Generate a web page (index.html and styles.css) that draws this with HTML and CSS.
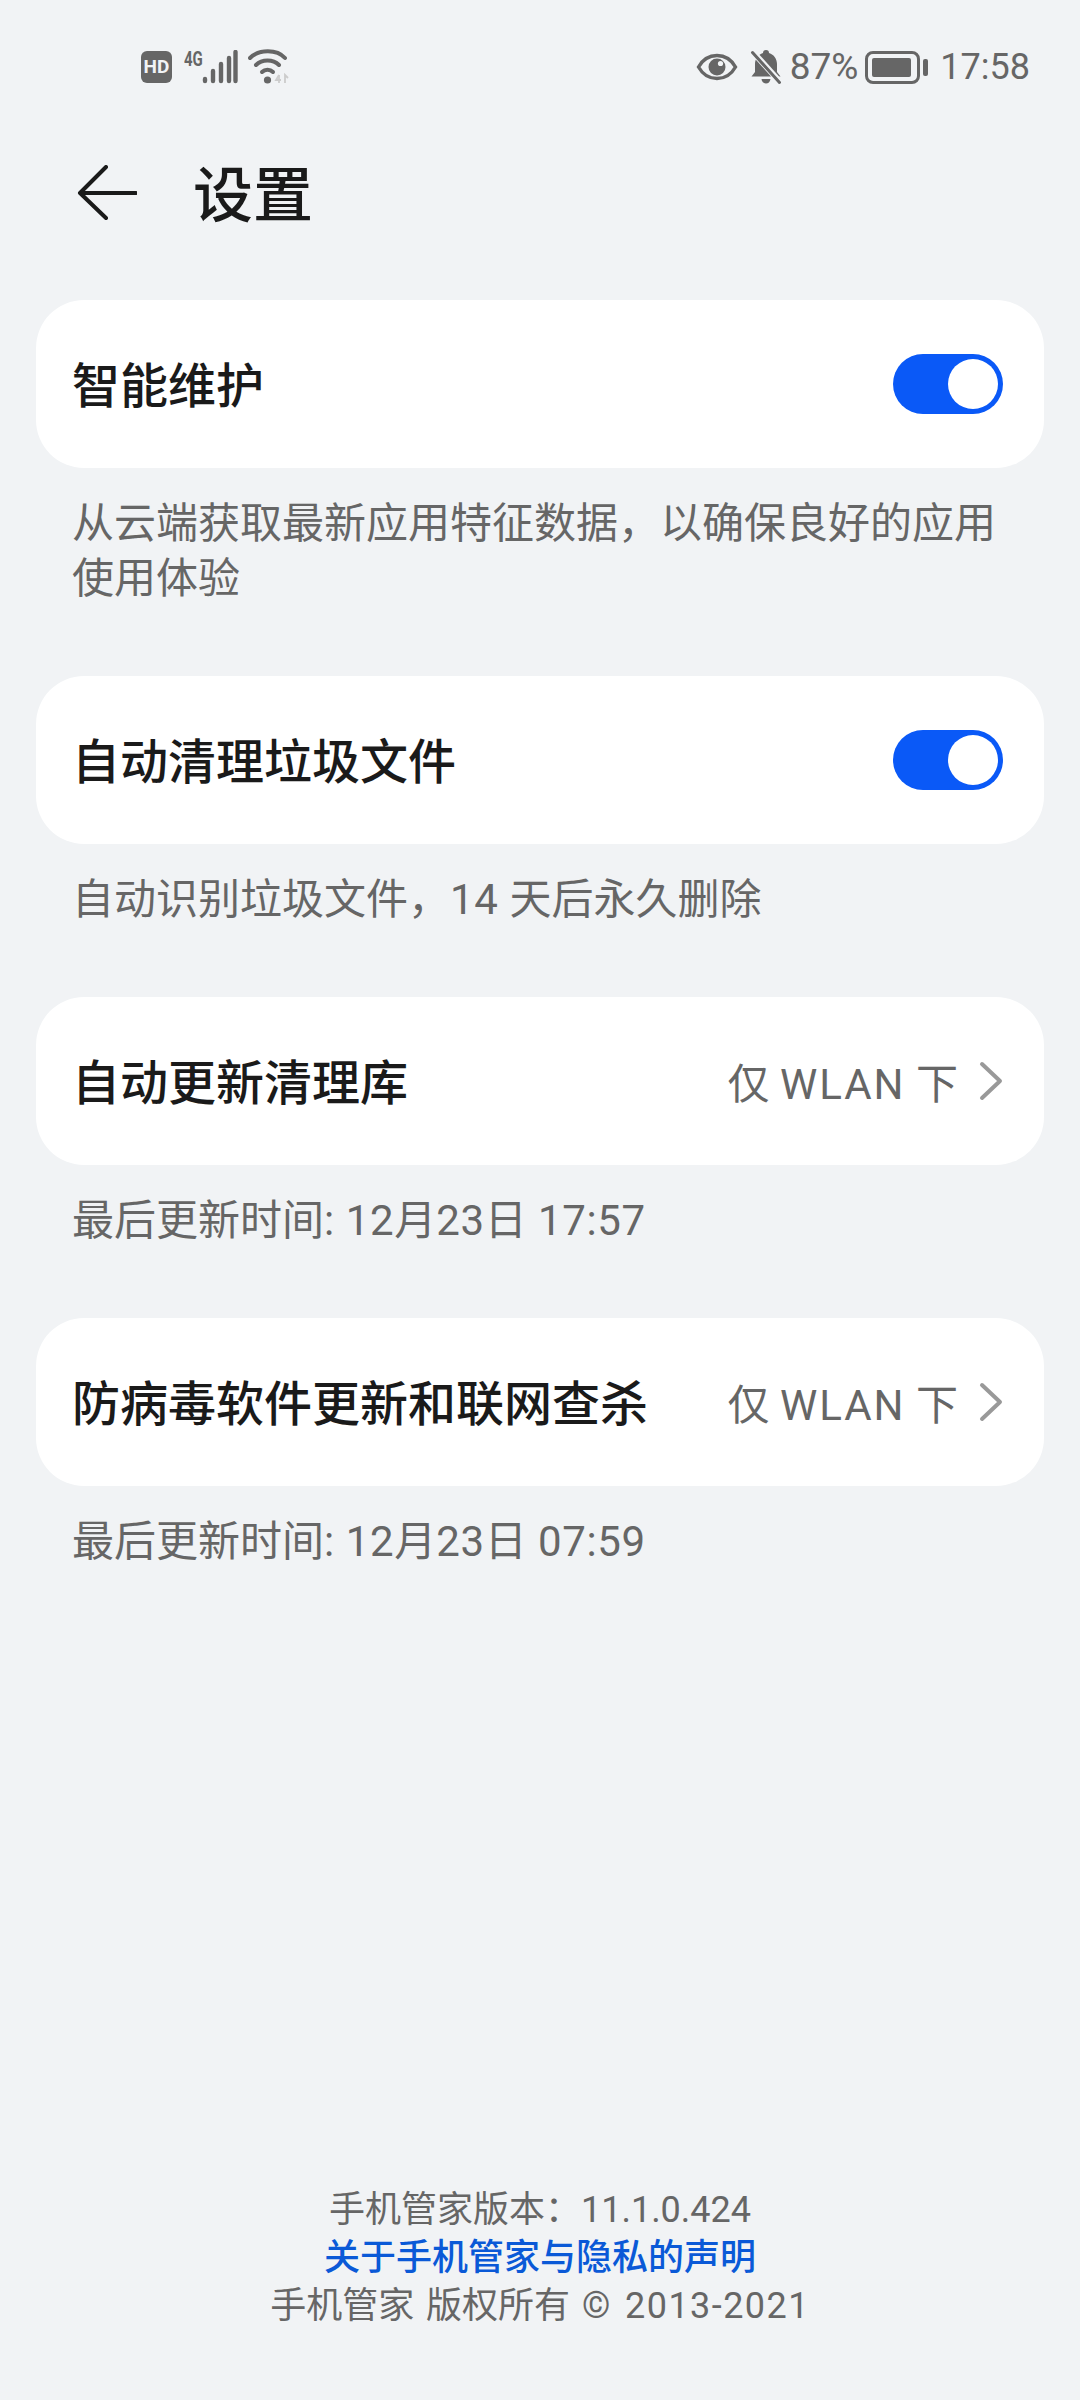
FILE: index.html
```html
<!DOCTYPE html>
<html lang="zh-CN">
<head>
    <meta charset="UTF-8">
    <meta name="viewport" content="width=device-width, initial-scale=1.0">
    <title>设置</title>
    <link rel="stylesheet" href="styles.css">
</head>
<body>
    <div class="page">
        <div class="status-bar">
            <div class="status-left">
                <span class="hd-badge">HD</span>
                <div class="signal">
                    <span class="signal-label">4G</span>
                    <svg class="signal-bars" width="36" height="34" viewBox="0 0 36 34">
                        <g fill="none" stroke="#666" stroke-width="4.4" stroke-linecap="round">
                            <path d="M3 29v2"/>
                            <path d="M11 21v10"/>
                            <path d="M19 14v17"/>
                            <path d="M27 8v23"/>
                            <path d="M33.500 2v29"/>
                        </g>
                    </svg>
                </div>
                <div class="wifi">
                    <svg width="42" height="36" viewBox="0 0 42 36">
                        <g fill="none" stroke="#666" stroke-width="4" stroke-linecap="round">
                            <path d="M2 9C11 0 29 0 37 9"/>
                            <path d="M8 16C14 10 25 10 31 16"/>
                            <path d="M14 23C17 20 22 20 25 23"/>
                        </g>
                        <circle cx="19.5" cy="31" r="3.6" fill="#666"/>
                        <g fill="none" stroke="#ccc" stroke-width="1.8">
                            <path d="M31 26l-3 5h5"/>
                            <path d="M31 26v8"/>
                            <path d="M37 34v-8l3 3"/>
                        </g>
                    </svg>
                </div>
            </div>
            <div class="status-right">
                <svg class="icon-eye" width="42" height="28" viewBox="0 0 42 28">
                    <path d="M2.500 14C7 6 13.500 2.500 21 2.500S35 6 39.500 14C35 22 28.500 25.500 21 25.500S7 22 2.500 14Z" fill="none" stroke="#666" stroke-width="3.400"/>
                    <circle cx="21" cy="14" r="8.500" fill="#666"/>
                    <circle cx="24.500" cy="10.500" r="2.600" fill="#f1f3f5"/>
                </svg>
                <svg class="icon-bell" width="34" height="36" viewBox="0 0 34 36">
                    <path d="M17 1a3 3 0 0 1 3 3c5 1.500 8 6 8 11v8l3.500 4.500H2.500L6 23v-8c0-5 3-9.500 8-11a3 3 0 0 1 3-3Z" fill="#666"/>
                    <path d="M12.500 30h9c-.5 3-2.300 4.500-4.500 4.500S13 33 12.500 30Z" fill="#666"/>
                    <path d="M3 2l28 31" stroke="#f1f3f5" stroke-width="6"/>
                    <path d="M3.500 3.500l27 30" stroke="#666" stroke-width="3" stroke-linecap="round"/>
                </svg>
                <span class="status-text percent">87%</span>
                <div class="battery">
                    <div class="battery-body"><div class="battery-fill"></div></div>
                    <div class="battery-nub"></div>
                </div>
                <span class="status-text clock">17:58</span>
            </div>
        </div>

        <div class="header">
            <svg class="back-icon" width="60" height="56" viewBox="0 0 60 56">
                <path d="M29 2L3 28h56M3 28l26 25" fill="none" stroke="#1a1a1a" stroke-width="4" stroke-linecap="round" stroke-linejoin="round"/>
            </svg>
            <h1>设置</h1>
        </div>

        <div class="section">
            <div class="card">
                <span class="card-title">智能维护</span>
                <div class="switch"><div class="switch-knob"></div></div>
            </div>
            <p class="desc">从云端获取最新应用特征数据，以确保良好的应用使用体验</p>
        </div>

        <div class="section">
            <div class="card">
                <span class="card-title">自动清理垃圾文件</span>
                <div class="switch"><div class="switch-knob"></div></div>
            </div>
            <p class="desc">自动识别垃圾文件，<span class="num">14 </span>天后永久删除</p>
        </div>

        <div class="section">
            <div class="card">
                <span class="card-title">自动更新清理库</span>
                <div class="card-value">
                    <span class="value-text">仅 <span class="wlan">WLAN</span> 下</span>
                    <svg class="chevron" width="24" height="40" viewBox="0 0 24 40">
                        <path d="M3 3l18 17L3 37" fill="none" stroke="#999" stroke-width="4" stroke-linecap="round" stroke-linejoin="round"/>
                    </svg>
                </div>
            </div>
            <p class="desc">最后更新时间<span class="num">: 12</span>月<span class="num">23</span>日<span class="num"> 17:57</span></p>
        </div>

        <div class="section">
            <div class="card">
                <span class="card-title">防病毒软件更新和联网查杀</span>
                <div class="card-value">
                    <span class="value-text">仅 <span class="wlan">WLAN</span> 下</span>
                    <svg class="chevron" width="24" height="40" viewBox="0 0 24 40">
                        <path d="M3 3l18 17L3 37" fill="none" stroke="#999" stroke-width="4" stroke-linecap="round" stroke-linejoin="round"/>
                    </svg>
                </div>
            </div>
            <p class="desc">最后更新时间<span class="num">: 12</span>月<span class="num">23</span>日<span class="num"> 07:59</span></p>
        </div>

        <div class="footer">
            <p>手机管家版本：11.1.0.424</p>
            <p class="footer-link">关于手机管家与隐私的声明</p>
            <p class="footer-copy">手机管家 版权所有 <span class="num">© 2013-2021</span></p>
        </div>
    </div>
</body>
</html>
```

FILE: styles.css
```css
* {
    box-sizing: border-box;
    margin: 0;
    padding: 0;
    font-family: 'Roboto', 'Noto Sans CJK SC', sans-serif;
}

body {
    background-color: #f1f3f5;
    color: #666;
}

.page {
    width: 1080px;
    height: 2400px;
    display: flex;
    flex-direction: column;
    padding: 0 36px;
}

/* status bar */
.status-bar {
    height: 132px;
    margin: 0 -36px;
    padding: 2px 50px 0 141px;
    display: flex;
    justify-content: space-between;
    align-items: center;
}

.status-left,
.status-right {
    display: flex;
    align-items: center;
}

.hd-badge {
    width: 31px;
    height: 32px;
    background-color: #666;
    border-radius: 6px;
    color: #f1f3f5;
    font-size: 19px;
    font-weight: 700;
    line-height: 32px;
    text-align: center;
}

.signal {
    display: flex;
    align-items: flex-start;
    margin-left: 12px;
}

.signal-label {
    width: 18px;
    font-size: 20px;
    font-weight: 700;
    line-height: 18px;
    transform: scaleX(0.75);
    transform-origin: left top;
}

.wifi {
    display: flex;
    margin-left: 10px;
}

.icon-eye {
    margin-right: 11px;
}

.icon-bell {
    margin-right: 7px;
}

.status-text {
    font-size: 37px;
    line-height: 44px;
}

.percent {
    margin-right: 7px;
}

.battery {
    display: flex;
    align-items: center;
}

.battery-body {
    width: 55px;
    height: 33px;
    border: 3px solid #666;
    border-radius: 8px;
    padding: 4px;
}

.battery-fill {
    width: 39px;
    height: 100%;
    background-color: #666;
    border-radius: 2px;
}

.battery-nub {
    width: 5px;
    height: 17px;
    margin-left: 3px;
    background-color: #666;
    border-radius: 2px;
}

.clock {
    margin-left: 12px;
    font-size: 36px;
}

/* header */
.header {
    height: 124px;
    padding: 0 0 8px 41px;
    display: flex;
    align-items: center;
}

.back-icon {
    margin: 6px 56px 0 0;
}

h1 {
    color: #1a1a1a;
    font-size: 60px;
    font-weight: 500;
}

/* sections */
.section {
    margin-top: 44px;
}

.section + .section {
    margin-top: 0;
    padding-top: 70px;
}

.card {
    height: 168px;
    padding: 0 41px 0 36px;
    background-color: #fff;
    border-radius: 48px;
    display: flex;
    justify-content: space-between;
    align-items: center;
}

.card-title {
    padding-bottom: 4px;
    color: #1a1a1a;
    font-size: 48px;
    font-weight: 500;
}

.switch {
    width: 110px;
    height: 60px;
    padding: 5px;
    background-color: #0a59f7;
    border-radius: 30px;
    display: flex;
    justify-content: flex-end;
}

.switch-knob {
    width: 50px;
    height: 50px;
    background-color: #fff;
    border-radius: 50%;
}

.card-value {
    font-size: 42px;
    display: flex;
    align-items: center;
    gap: 21px;
}

.value-text {
    padding-bottom: 2px;
}

.wlan {
    letter-spacing: 2px;
}

.desc {
    margin-top: 28px;
    padding: 0 36px;
    font-size: 42px;
    line-height: 55px;
}

.num {
    letter-spacing: 0.015em;
}

/* footer */
.footer {
    margin-top: auto;
    padding-bottom: 70px;
    font-size: 36px;
    line-height: 48px;
    text-align: center;
}

.footer-link {
    color: #0a59d7;
    font-weight: 500;
}

.footer-copy {
    word-spacing: 3px;
}

.footer-copy .num {
    letter-spacing: 0.04em;
}
```
